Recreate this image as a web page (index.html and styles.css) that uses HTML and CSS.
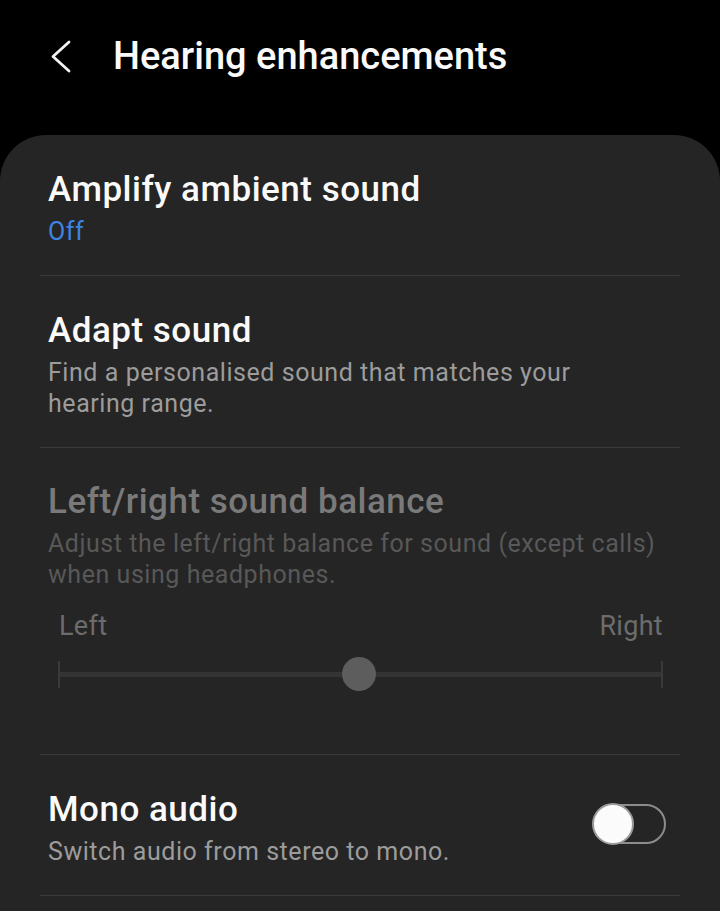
FILE: index.html
```html
<!DOCTYPE html>
<html lang="en">
<head>
<meta charset="utf-8">
<title>Hearing enhancements</title>
<link rel="stylesheet" href="styles.css">
</head>
<body>
<header class="appbar">
  <svg class="back" width="26" height="34" viewBox="0 0 26 34" aria-hidden="true">
    <polyline points="20,2 4,16.5 20,31" fill="none" stroke="#f2f2f2" stroke-width="2.8" stroke-linecap="round" stroke-linejoin="round"/>
  </svg>
  <h1 class="appbar-title">Hearing enhancements</h1>
</header>
<main class="card">
  <section class="item">
    <div class="item-text">
      <div class="item-title">Amplify ambient sound</div>
      <div class="item-status">Off</div>
    </div>
  </section>
  <section class="item">
    <div class="item-text">
      <div class="item-title">Adapt sound</div>
      <div class="item-desc">Find a personalised sound that matches your hearing range.</div>
    </div>
  </section>
  <section class="item item-disabled">
    <div class="item-text">
      <div class="item-title">Left/right sound balance</div>
      <div class="item-desc">Adjust the left/right balance for sound (except calls) when using headphones.</div>
      <div class="balance-labels"><span>Left</span><span>Right</span></div>
      <div class="slider">
        <span class="tick"></span>
        <span class="track"></span>
        <span class="tick"></span>
        <span class="thumb"></span>
      </div>
    </div>
  </section>
  <section class="item item-switch">
    <div class="item-text">
      <div class="item-title">Mono audio</div>
      <div class="item-desc">Switch audio from stereo to mono.</div>
    </div>
    <div class="switch"><span class="switch-thumb"></span></div>
  </section>
</main>
</body>
</html>
```
FILE: styles.css
```css
html, body {
  margin: 0;
  padding: 0;
  background: #000;
}
body {
  font-family: Roboto, "Noto Sans", "Liberation Sans", sans-serif;
  color: #fafafa;
  width: 720px;
  height: 911px;
  overflow: hidden;
}
.appbar {
  display: flex;
  align-items: center;
  height: 135px;
  box-sizing: border-box;
  padding: 0 0 24px 49px;
}
.back {
  display: block;
  margin-top: 2px;
}
.appbar-title {
  margin: 0 0 0 38px;
  font-size: 38px;
  font-weight: 500;
  line-height: 46px;
  color: #fafafa;
  letter-spacing: 0;
}
.card {
  background: #252525;
  border-radius: 46px 46px 0 0;
  padding: 0 40px;
  min-height: 776px;
  box-sizing: border-box;
}
.item {
  display: flex;
  align-items: center;
  padding: 29px 14px 28px 8px;
  border-bottom: 1px solid #3b3b3b;
}
.item-text {
  flex: 1;
  min-width: 0;
}
.item-title {
  font-size: 35px;
  font-weight: 500;
  line-height: 52px;
  letter-spacing: 0.5px;
  color: #fafafa;
}
.item-status {
  font-size: 25px;
  line-height: 31px;
  letter-spacing: 0.5px;
  color: #3e84e2;
}
.item-desc {
  max-width: 608px;
  font-size: 25px;
  line-height: 31px;
  letter-spacing: 0.55px;
  color: #9c9c9c;
}
.item-disabled {
  padding-top: 28px;
  padding-bottom: 60px;
}
.item-disabled .item-title {
  color: #7a7a7a;
}
.item-disabled .item-desc {
  color: #585858;
}
.balance-labels {
  display: flex;
  justify-content: space-between;
  margin: 21px 3px 0 11px;
  font-size: 27px;
  line-height: 31px;
  letter-spacing: 0.3px;
  color: #6c6c6c;
}
.slider {
  position: relative;
  display: flex;
  align-items: center;
  height: 40px;
  margin: 12px 3px 0 10px;
}
.tick {
  width: 2px;
  height: 27px;
  background: #3a3a3a;
}
.track {
  flex: 1;
  height: 5px;
  background: #343434;
}
.thumb {
  position: absolute;
  left: 284px;
  top: 3px;
  width: 34px;
  height: 34px;
  border-radius: 50%;
  background: #5d5d5d;
}
.item-switch .switch {
  margin-bottom: 3px;
}
.switch {
  position: relative;
  width: 73px;
  height: 40px;
  box-sizing: border-box;
  border: 2px solid #8c8c8c;
  border-radius: 20px;
  flex-shrink: 0;
}
.switch-thumb {
  position: absolute;
  left: -3px;
  top: -3px;
  width: 42px;
  height: 42px;
  box-sizing: border-box;
  border-radius: 50%;
  background: #fbfbfb;
  border: 2px solid #9a9a9a;
}
```
